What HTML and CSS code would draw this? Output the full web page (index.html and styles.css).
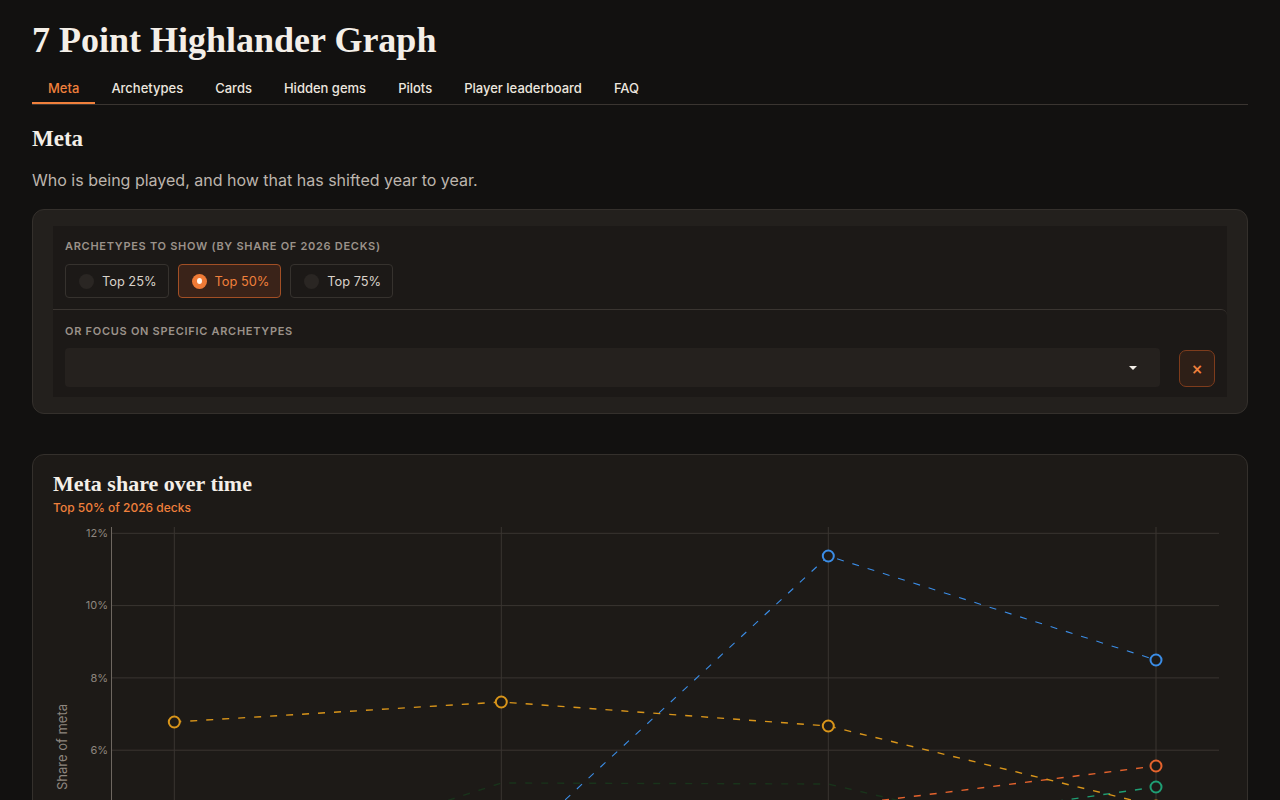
FILE: index.html
```html
<!DOCTYPE html>
<html lang="en">
<head>
<meta charset="utf-8">
<title>7 Point Highlander Graph</title>
<link rel="stylesheet" href="styles.css">
</head>
<body>
<header class="site-header">
  <h1 class="site-title">7 Point Highlander Graph</h1>
  <nav class="tabs">
    <a class="tab active">Meta</a>
    <a class="tab">Archetypes</a>
    <a class="tab">Cards</a>
    <a class="tab">Hidden gems</a>
    <a class="tab">Pilots</a>
    <a class="tab">Player leaderboard</a>
    <a class="tab">FAQ</a>
  </nav>
</header>
<main>
  <section class="page-intro">
    <h2 class="page-title">Meta</h2>
    <p class="page-desc">Who is being played, and how that has shifted year to year.</p>
  </section>

  <div class="controls-card">
    <div class="controls-panel">
      <div class="field field-top">
        <div class="field-label">Archetypes to show (by share of 2026 decks)</div>
        <div class="radio-group">
          <label class="radio"><span class="radio-dot"></span>Top 25%</label>
          <label class="radio active"><span class="radio-dot"></span>Top 50%</label>
          <label class="radio"><span class="radio-dot"></span>Top 75%</label>
        </div>
      </div>
      <div class="field field-bottom">
        <div class="field-label">Or focus on specific archetypes</div>
        <div class="select-row">
          <div class="select"><span class="caret"></span></div>
          <button class="clear-btn">×</button>
        </div>
      </div>
    </div>
  </div>

  <section class="chart-card">
    <h3 class="chart-title">Meta share over time</h3>
    <div class="chart-sub">Top 50% of 2026 decks</div>
    <svg class="chart" width="1174" height="480" viewBox="0 0 1174 480">
      <g class="grid">
        <line x1="58" y1="13.3" x2="1166" y2="13.3"/>
        <line x1="58" y1="85.6" x2="1166" y2="85.6"/>
        <line x1="58" y1="157.9" x2="1166" y2="157.9"/>
        <line x1="58" y1="230.2" x2="1166" y2="230.2"/>
        <line x1="58" y1="302.5" x2="1166" y2="302.5"/>
        <line x1="58" y1="374.8" x2="1166" y2="374.8"/>
        <line x1="121.3" y1="7" x2="121.3" y2="447"/>
        <line x1="448.3" y1="7" x2="448.3" y2="447"/>
        <line x1="775.3" y1="7" x2="775.3" y2="447"/>
        <line x1="1103" y1="7" x2="1103" y2="447"/>
      </g>
      <line class="axis" x1="58.5" y1="7" x2="58.5" y2="447"/>
      <g class="ticks">
        <text x="55" y="14">12%</text>
        <text x="55" y="86.3">10%</text>
        <text x="55" y="158.6">8%</text>
        <text x="55" y="230.9">6%</text>
        <text x="55" y="303.2">4%</text>
        <text x="55" y="375.5">2%</text>
      </g>
      <text class="axis-title" transform="translate(10 227) rotate(-90)">Share of meta</text>

      <polyline class="series s-dim" points="121.3,370 448.3,263 775.3,264 1103,341"/>
      <polyline class="series s-blue" points="121.3,375 448.3,339 775.3,36 1103,140"/>
      <polyline class="series s-red" points="448.3,330 775.3,287 1103,246"/>
      <polyline class="series s-green" points="448.3,360 775.3,314 1103,267"/>
      <polyline class="series s-amber" points="121.3,202 448.3,182 775.3,206 1103,286"/>

      <g class="markers">
        <circle class="m-blue" cx="775.3" cy="36" r="5.5"/>
        <circle class="m-blue" cx="1103" cy="140" r="5.5"/>
        <circle class="m-blue" cx="448.3" cy="339" r="5.5"/>
        <circle class="m-red" cx="1103" cy="246" r="5.5"/>
        <circle class="m-red" cx="775.3" cy="287" r="5.5"/>
        <circle class="m-green" cx="1103" cy="267" r="5.5"/>
        <circle class="m-green" cx="775.3" cy="314" r="5.5"/>
        <circle class="m-amber" cx="121.3" cy="202" r="5.5"/>
        <circle class="m-amber" cx="448.3" cy="182" r="5.5"/>
        <circle class="m-amber" cx="775.3" cy="206" r="5.5"/>
        <circle class="m-amber" cx="1103" cy="286" r="5.5"/>
      </g>
    </svg>
  </section>
</main>
</body>
</html>
```

FILE: styles.css
```css
* { box-sizing: border-box; }

html, body {
  margin: 0;
  background: #121110;
}

body {
  padding: 0 32px;
  color: #f2ede6;
  font-family: Inter, "Noto Sans", "DejaVu Sans", sans-serif;
}

.site-title {
  margin: 18px 0 0;
  font-family: "Liberation Serif", "DejaVu Serif", serif;
  font-weight: 700;
  font-size: 36px;
  line-height: 44px;
  color: #f4efe8;
}

.tabs {
  display: flex;
  margin-top: 10px;
  border-bottom: 1px solid #3a3531;
}

.tab {
  padding: 8px 16px 6px;
  font-size: 13px;
  line-height: 16px;
  font-weight: 500;
  color: #ece6df;
  border-bottom: 2px solid transparent;
  cursor: pointer;
}

.tab.active {
  color: #f0803c;
  border-bottom-color: #f0803c;
}

.page-title {
  margin: 20px 0 0;
  font-family: "Liberation Serif", "DejaVu Serif", serif;
  font-weight: 700;
  font-size: 23px;
  line-height: 28px;
  color: #f4efe8;
}

.page-desc {
  margin: 15px 0 0;
  font-size: 16px;
  line-height: 24px;
  color: #bdb5ad;
}

.controls-card {
  margin-top: 17px;
  padding: 16px 20px;
  background: #23201d;
  border: 1px solid #34302c;
  border-radius: 12px;
}

.controls-panel {
  background: #1c1917;
}

.field {
  padding: 13px 12px 11px;
}

.field-bottom {
  border-top: 1px solid #3a3531;
  border-top-right-radius: 6px;
  padding-top: 14px;
  padding-bottom: 10px;
}

.field-label {
  font-size: 11px;
  line-height: 14px;
  font-weight: 600;
  letter-spacing: 0.065em;
  text-transform: uppercase;
  color: #9b928a;
}

.radio-group {
  display: flex;
  gap: 9px;
  margin-top: 11px;
}

.radio {
  display: flex;
  align-items: center;
  gap: 8px;
  height: 34px;
  padding: 0 11px 0 13px;
  border: 1px solid #36322e;
  border-radius: 4px;
  font-size: 12.8px;
  color: #d9d2ca;
  cursor: pointer;
}

.radio-dot {
  width: 15px;
  height: 15px;
  border-radius: 50%;
  background: #2a2623;
  display: flex;
  align-items: center;
  justify-content: center;
}

.radio.active {
  background: #3a2319;
  border-color: #a24f25;
  color: #f0803c;
}

.radio.active .radio-dot {
  background: #ef7a36;
}

.radio.active .radio-dot::after {
  content: "";
  width: 5px;
  height: 6px;
  border-radius: 50%;
  background: #fff6ee;
}

.select-row {
  display: flex;
  align-items: flex-end;
  gap: 19px;
  margin-top: 10px;
}

.select {
  flex: 1;
  height: 39px;
  background: #25211e;
  border-radius: 4px;
  display: flex;
  align-items: center;
  justify-content: flex-end;
  padding-right: 23px;
}

.caret {
  width: 0;
  height: 0;
  border-left: 4px solid transparent;
  border-right: 4px solid transparent;
  border-top: 4px solid #f4efe8;
}

.clear-btn {
  width: 36px;
  height: 37px;
  padding: 0;
  background: #2e1f17;
  border: 1px solid #7e3c1c;
  border-radius: 7px;
  color: #f0803c;
  font-family: "DejaVu Sans", sans-serif;
  font-size: 14px;
  font-weight: 700;
  line-height: 1;
}

.chart-card {
  margin-top: 40px;
  padding: 16px 20px 20px;
  background: #1d1a17;
  border: 1px solid #34302c;
  border-radius: 12px;
}

.chart-title {
  margin: 0;
  font-family: "Liberation Serif", "DejaVu Serif", serif;
  font-weight: 700;
  font-size: 22px;
  line-height: 26px;
  color: #f4efe8;
}

.chart-sub {
  margin-top: 3px;
  font-size: 12px;
  line-height: 16px;
  font-weight: 500;
  color: #f0803c;
}

.chart {
  display: block;
  margin-top: 4px;
}

.grid line {
  stroke: #3a3531;
  stroke-width: 1;
}

.axis {
  stroke: #6e6760;
  stroke-width: 1;
}

.ticks text {
  font-family: Inter, "Noto Sans", sans-serif;
  font-size: 11px;
  fill: #8e867f;
  text-anchor: end;
  dominant-baseline: middle;
}

.axis-title {
  font-family: Inter, "Noto Sans", sans-serif;
  font-size: 13px;
  fill: #8e867f;
  text-anchor: middle;
  dominant-baseline: middle;
}

.series {
  fill: none;
  stroke-width: 1.4;
  stroke-dasharray: 7 9;
}

.s-amber { stroke: #d9951a; }
.s-blue { stroke: #3b8de6; stroke-width: 1.1; }
.s-red { stroke: #e5632d; }
.s-green { stroke: #1f9e74; }
.s-dim { stroke: #19331b; }

.markers circle {
  fill: #1d1a17;
  stroke-width: 2;
}

.m-amber { stroke: #d9951a; }
.m-blue { stroke: #3b8de6; }
.m-red { stroke: #e5632d; }
.m-green { stroke: #1f9e74; }
```
